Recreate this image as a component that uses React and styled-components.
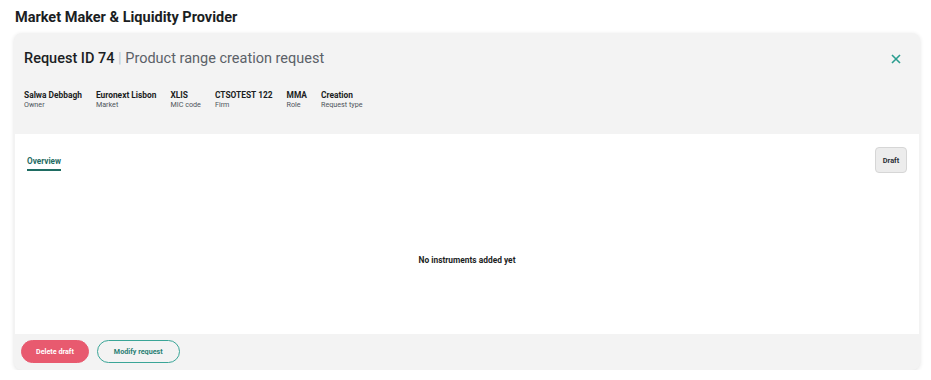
import React from "react";
import styled, { createGlobalStyle } from "styled-components";

const GlobalStyle = createGlobalStyle`
  html, body {
    margin: 0;
    padding: 0;
    background: #ffffff;
  }
  body {
    font-family: Roboto, "Liberation Sans", sans-serif;
    color: #1f2933;
  }
`;

const Page = styled.div`
  width: 931px;
  padding: 9px 11px 0 14px;
  box-sizing: border-box;
`;

const PageTitle = styled.h1`
  margin: 0 0 7px 1px;
  font-size: 14.5px;
  line-height: 17px;
  font-weight: 700;
  color: #1b1e23;
`;

const Card = styled.div`
  width: 906px;
  background: #f3f3f3;
  border-radius: 8px;
  box-shadow: 0 1px 4px rgba(0, 0, 0, 0.12);
  display: flex;
  flex-direction: column;
  overflow: hidden;
`;

const Header = styled.div`
  padding: 16px 18px 0 10px;
  height: 101px;
  box-sizing: border-box;
`;

const HeadRow = styled.div`
  display: flex;
  align-items: center;
  justify-content: space-between;
`;

const Heading = styled.h2`
  margin: 0;
  font-size: 14.5px;
  line-height: 20px;
  font-weight: 500;
  color: #1b1e23;
`;

const Sub = styled.span`
  font-weight: 400;
  color: #5b6168;
`;

const Pipe = styled.span`
  color: #b9c7d3;
  font-weight: 400;
`;

const Close = styled.button`
  border: 0;
  background: none;
  padding: 0;
  width: 12px;
  height: 12px;
  display: flex;
  cursor: pointer;
`;

const Meta = styled.div`
  display: flex;
  gap: 14px;
  margin-top: 21px;
`;

const MetaItem = styled.div`
  display: flex;
  flex-direction: column;
`;

const MetaValue = styled.span`
  font-size: 8.4px;
  line-height: 10px;
  font-weight: 700;
  color: #1b1e23;
`;

const MetaLabel = styled.span`
  font-size: 7.2px;
  line-height: 10px;
  color: #4d535a;
`;

const Body = styled.div`
  background: #ffffff;
  margin: 0 1px;
  height: 200px;
  display: flex;
  flex-direction: column;
`;

const TabBar = styled.div`
  display: flex;
  justify-content: space-between;
  align-items: flex-start;
  padding: 13px 12px 0 12px;
`;

const Tab = styled.div`
  margin-top: 9px;
  padding-bottom: 3px;
  font-size: 8.2px;
  line-height: 10px;
  font-weight: 700;
  color: #1f6c62;
  border-bottom: 2px solid #1f6c62;
`;

const Badge = styled.div`
  width: 32px;
  height: 26px;
  box-sizing: border-box;
  border: 1px solid #d6d6d6;
  border-radius: 4px;
  background: #ececec;
  display: flex;
  align-items: center;
  justify-content: center;
  font-size: 7.4px;
  font-weight: 700;
  color: #2b2f35;
`;

const Empty = styled.div`
  flex: 1;
  display: flex;
  align-items: center;
  justify-content: center;
  padding-top: 13px;
  font-size: 8.4px;
  font-weight: 700;
  color: #1b1e23;
`;

const Footer = styled.div`
  display: flex;
  gap: 8px;
  padding: 6px 7px 7px 7px;
  height: 36px;
  box-sizing: border-box;
`;

const Button = styled.button`
  height: 23px;
  padding: 0 ${(p) => p.$pad}px;
  border-radius: 12px;
  font-family: inherit;
  font-size: 7.2px;
  font-weight: 700;
  cursor: pointer;
  box-sizing: border-box;
  border: 1.5px solid ${(p) => (p.$danger ? "#e85a6f" : "#3aa597")};
  background: ${(p) => (p.$danger ? "#e85a6f" : "transparent")};
  color: ${(p) => (p.$danger ? "#ffffff" : "#2a7f73")};
`;

const meta = [
  ["Salwa Debbagh", "Owner"],
  ["Euronext Lisbon", "Market"],
  ["XLIS", "MIC code"],
  ["CTSOTEST 122", "Firm"],
  ["MMA", "Role"],
  ["Creation", "Request type"],
];

export default function App() {
  return (
    <Page>
      <GlobalStyle />
      <PageTitle>Market Maker &amp; Liquidity Provider</PageTitle>
      <Card>
        <Header>
          <HeadRow>
            <Heading>
              Request ID 74 <Pipe>|</Pipe> <Sub>Product range creation request</Sub>
            </Heading>
            <Close aria-label="Close">
              <svg width="12" height="12" viewBox="0 0 12 12">
                <path d="M2 2 L10 10 M10 2 L2 10" stroke="#2a9d8f" strokeWidth="1.6" />
              </svg>
            </Close>
          </HeadRow>
          <Meta>
            {meta.map(([v, l]) => (
              <MetaItem key={l}>
                <MetaValue>{v}</MetaValue>
                <MetaLabel>{l}</MetaLabel>
              </MetaItem>
            ))}
          </Meta>
        </Header>
        <Body>
          <TabBar>
            <Tab>Overview</Tab>
            <Badge>Draft</Badge>
          </TabBar>
          <Empty>No instruments added yet</Empty>
        </Body>
        <Footer>
          <Button $danger $pad={14}>Delete draft</Button>
          <Button $pad={16}>Modify request</Button>
        </Footer>
      </Card>
    </Page>
  );
}
